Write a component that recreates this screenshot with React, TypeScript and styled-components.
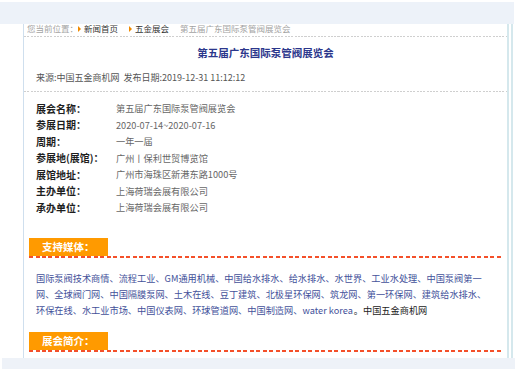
import React from 'react';
import styled, { createGlobalStyle } from 'styled-components';

const GlobalStyle = createGlobalStyle`
  body {
    margin: 0;
    background: #fff;
    font-family: "Noto Sans CJK SC", "Noto Sans", sans-serif;
  }
`;

const Page = styled.div`
  width: 517px;
  height: 369px;
  overflow: hidden;
`;

const TopBand = styled.div`
  margin-top: 2px;
  width: 514px;
  height: 22px;
  background: #edf2f9;
`;

const BottomBand = styled.div`
  margin-left: 2px;
  width: 513px;
  height: 11px;
  background: #eef2f8;
`;

const Frame = styled.div`
  margin-left: 23px;
  width: 486px;
  padding-right: 2px;
  border-right: 2px solid #d5e8ed;
`;

const Panel = styled.div`
  height: 334px;
  border-left: 1px solid #cfdfee;
  border-right: 2px solid #d5e8ed;
  display: flex;
  flex-direction: column;
`;

const Crumbs = styled.div`
  height: 12px;
  padding-left: 3px;
  display: flex;
  align-items: flex-start;
  font-size: 8.5px;
  line-height: 9px;
  color: #9a9a9a;
  white-space: nowrap;
`;

const Crumb = styled.span<{ $dark?: boolean; $gap?: number }>`
  color: ${p => (p.$dark ? '#333' : '#a3a3a3')};
  margin-right: ${p => p.$gap ?? 0}px;
`;

const Arrow = styled.span`
  width: 0;
  height: 0;
  margin: 1.5px 3px 0 0;
  border-top: 3px solid transparent;
  border-bottom: 3px solid transparent;
  border-left: 3px solid #f08a00;
`;

const GrayDash = styled.div<{ $top?: number }>`
  height: 1px;
  margin-top: ${p => p.$top ?? 0}px;
  background: repeating-linear-gradient(to right, #cfcfcf 0 2px, transparent 2px 3.3px);
`;

const Title = styled.h1`
  margin: 7.5px 0 0;
  text-align: center;
  font-size: 10.5px;
  line-height: 16px;
  font-weight: 700;
  color: #2c378c;
`;

const Source = styled.div`
  margin-top: 10.5px;
  padding-left: 12px;
  font-size: 9px;
  line-height: 14px;
  color: #555;
  white-space: pre;
`;

const InfoList = styled.dl`
  margin: 8px 0 0;
  padding-left: 12px;
  display: grid;
  grid-template-columns: 80px 1fr;
  grid-auto-rows: 16.5px;
  align-items: center;
`;

const Label = styled.dt`
  font-size: 10px;
  font-weight: 700;
  color: #1e1e1e;
  white-space: nowrap;
`;

const Value = styled.dd`
  margin: 0;
  font-size: 9.2px;
  color: #666;
  white-space: nowrap;
`;

const Section = styled.div<{ $top: number }>`
  margin: ${p => p.$top}px 0 0 5px;
  width: 474px;
  display: flex;
  flex-direction: column;
`;

const Tag = styled.div`
  width: 79px;
  height: 18px;
  box-sizing: border-box;
  padding-left: 13px;
  background: #ff9a00;
  color: #fff;
  font-size: 10.5px;
  font-weight: 700;
  line-height: 18px;
`;

const RedDash = styled.div`
  height: 2px;
  background: repeating-linear-gradient(to right, #f4502a 0 4px, transparent 4px 6.5px);
`;

const Media = styled.p`
  margin: 12px 0 0 7px;
  width: 453px;
  font-size: 9.2px;
  line-height: 16px;
  color: #43519a;
`;

const Plain = styled.span`
  margin-left: 1px;
  color: #222;
`;

const info: [string, string][] = [
  ['展会名称：', '第五届广东国际泵管阀展览会'],
  ['参展日期：', '2020-07-14~2020-07-16'],
  ['周期：', '一年一届'],
  ['参展地(展馆)：', '广州丨保利世贸博览馆'],
  ['展馆地址：', '广州市海珠区新港东路1000号'],
  ['主办单位：', '上海荷瑞会展有限公司'],
  ['承办单位：', '上海荷瑞会展有限公司'],
];

const media =
  '国际泵阀技术商情、流程工业、GM通用机械、中国给水排水、给水排水、水世界、工业水处理、中国泵阀第一网、全球阀门网、中国隔膜泵网、土木在线、豆丁建筑、北极星环保网、筑龙网、第一环保网、建筑给水排水、环保在线、水工业市场、中国仪表网、环球管道网、中国制造网、water korea';

const App = () => {
  return (
    <Page>
      <GlobalStyle />
      <TopBand />
      <Frame>
        <Panel>
          <Crumbs>
            <Crumb>您当前位置：</Crumb>
            <Arrow />
            <Crumb $dark $gap={11}>新闻首页</Crumb>
            <Arrow />
            <Crumb $dark $gap={11}>五金展会</Crumb>
            <Crumb>第五届广东国际泵管阀展览会</Crumb>
          </Crumbs>
          <GrayDash />
          <Title>第五届广东国际泵管阀展览会</Title>
          <Source>{'来源:中国五金商机网  发布日期:2019-12-31 11:12:12'}</Source>
          <GrayDash $top={6} />
          <InfoList>
            {info.map(([k, v]) => (
              <React.Fragment key={k}>
                <Label>{k}</Label>
                <Value>{v}</Value>
              </React.Fragment>
            ))}
          </InfoList>
          <Section $top={22}>
            <Tag>支持媒体：</Tag>
            <RedDash />
            <Media>
              {media}
              <Plain>。中国五金商机网</Plain>
            </Media>
          </Section>
          <Section $top={14}>
            <Tag>展会简介：</Tag>
            <RedDash />
          </Section>
        </Panel>
      </Frame>
      <BottomBand />
    </Page>
  );
};

export default App;
